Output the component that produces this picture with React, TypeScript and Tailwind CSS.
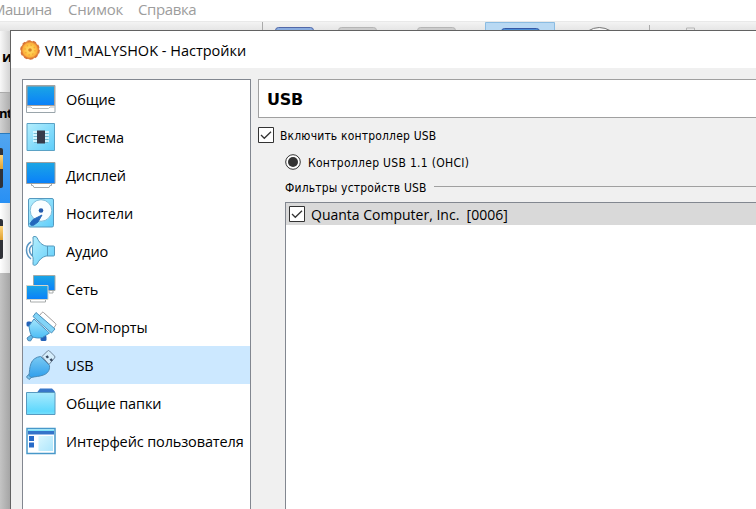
import React from "react";

type IconProps = { children: React.ReactNode };

function Icon({ children }: IconProps) {
  return (
    <svg width="32" height="32" viewBox="0 0 32 32" fill="none" className="shrink-0">
      {children}
    </svg>
  );
}

function Gradients() {
  return (
    <svg width="0" height="0" className="absolute">
      <defs>
        <linearGradient id="screen" x1="0" y1="0" x2="0" y2="1">
          <stop offset="0" stopColor="#1ba6e4" />
          <stop offset="1" stopColor="#0a80fa" />
        </linearGradient>
        <linearGradient id="light" x1="0" y1="0" x2="1" y2="1">
          <stop offset="0" stopColor="#b4eefd" />
          <stop offset="1" stopColor="#5ecdfa" />
        </linearGradient>
        <linearGradient id="folder" x1="0" y1="0" x2="0" y2="1">
          <stop offset="0" stopColor="#a9eafd" />
          <stop offset="0.85" stopColor="#5fd8fd" />
          <stop offset="1" stopColor="#79e0fc" />
        </linearGradient>
        <linearGradient id="plug" x1="0" y1="0" x2="0" y2="1">
          <stop offset="0" stopColor="#79caf3" />
          <stop offset="1" stopColor="#309fec" />
        </linearGradient>
        <linearGradient id="serial" x1="0" y1="0" x2="0" y2="1">
          <stop offset="0" stopColor="#a5e6fc" />
          <stop offset="1" stopColor="#4cbdf5" />
        </linearGradient>
        <radialGradient id="gear">
          <stop offset="0" stopColor="#ffe070" />
          <stop offset="0.6" stopColor="#ffc445" />
          <stop offset="1" stopColor="#f79a35" />
        </radialGradient>
      </defs>
    </svg>
  );
}

const GeneralIcon = () => (
  <Icon>
    <path d="M1.500 2.500h28.500v27H1.500z" fill="#fff" stroke="#9aa5ab" />
    <path d="M2 3h27.500v19.500H2z" fill="url(#screen)" stroke="#aaa29b" />
    <path d="M2 24h4l1.500 1.500h16L25 24h4.500" stroke="#b4b8ba" />
  </Icon>
);
const SystemIcon = () => (
  <Icon>
    <path d="M2 2.500h27.500v27H2z" fill="url(#light)" stroke="#5ba2c5" />
    <path d="M8 11h16M8 14h16M8 17h16M8 20h16" stroke="#e9fcff" strokeWidth="1.500" />
    <path d="M9 12.500h14M9 15.500h14M9 18.500h14M9 21.500h14" stroke="#6aa7bd" strokeWidth=".7" />
    <path d="M12 9.500h8v13h-8z" fill="#373b4b" />
  </Icon>
);
const DisplayIcon = () => (
  <Icon>
    <path d="M6.500 24h20v2.500H25L24 28.500H9l-1-2H6.500z" fill="#fff" stroke="#a4a8aa" />
    <path d="M1.500 3.500H30v21H1.500z" fill="url(#screen)" stroke="#9ca0a0" />
  </Icon>
);
const StorageIcon = () => (
  <Icon>
    <rect x="3.500" y="1.500" width="25" height="28.500" rx="1.500" fill="url(#light)" stroke="#5599bf" />
    <circle cx="16" cy="13.500" r="10.800" fill="#fafeff" stroke="#7dbddb" />
    <circle cx="16" cy="13.500" r="2.300" fill="#245bad" />
    <path d="m17 18-9 4.500-3 4c0 2 2 2.500 4 1.500l4-3z" fill="#2368bd" stroke="#2b6cbc" />
  </Icon>
);
const AudioIcon = () => (
  <Icon>
    <path d="M6 7c-6 3-6 13 0 17M7.500 10c-4 3-4 8 0 11" stroke="#5a96c3" strokeWidth="1.500" />
    <path d="M7.500 11.500c1-2 .5-6 .5-9.500 1-1 3-.5 4 .5 2 5 5 7.500 9 8.500h7.500q1 0 1 1v8q0 1-1 1H21c-4 1-7 4-9 8-2 2-4 1.500-4 0 0-4 .5-6-.5-8z" fill="url(#light)" stroke="#5599bd" />
    <path d="M22.500 11v10" stroke="#5599bd" />
  </Icon>
);
const NetworkIcon = () => (
  <Icon>
    <path d="M24 17h4v3h-4zM5.500 26h15v3h-15z" fill="#fff" stroke="#a7abab" />
    <path d="M8.500 2.500H30v15H8.500z" fill="url(#screen)" stroke="#a3aaa8" />
    <path d="M1.500 12.500H23v14H1.500z" fill="url(#screen)" stroke="#d4d4c8" />
  </Icon>
);
const SerialIcon = () => (
  <Icon>
    <path d="M14.500 4.500 17 1.500q.7-.7 1.500 0l12 11q.8.800.2 1.700L28 18z" fill="#fff" stroke="#a09c9c" />
    <path d="m6 24-4 3 1 2.500 2.500.5L8 26z" fill="#66bce7" stroke="#4e88b8" strokeLinejoin="round" />
    <rect x="1.500" y="10.500" width="5" height="5" rx="1.500" fill="#2463b9" />
    <rect x="15.500" y="24.500" width="6" height="5.500" rx="1.500" fill="#2463b9" />
    <path d="M9 8 4 15c.5 4 1 8 3.500 11 3 .8 6 1.500 10 .5l7-4.500z" fill="url(#serial)" stroke="#438fc2" strokeLinejoin="round" />
    <path d="m8 5.500 3-4L30 18l-3.500 4z" fill="#83d4f7" stroke="#4b91bd" strokeLinejoin="round" />
  </Icon>
);
const UsbIcon = () => (
  <Icon>
    <path d="m17 7.500 5.500-5.500q1-1 2 0l5 5q1 1 0 2L24 15.500z" fill="#d5edfb" stroke="#6f8499" />
    <path d="m20.500 7.500 2-1.200 1.500 2-2 1.200zM24.500 10.500l2-1.200 1.500 2-2 1.200z" fill="#394a61" />
    <path d="m3.500 25.500-2 2.500 2.500 2.500 3-2.500z" fill="#76c1ec" stroke="#4d86ad" />
    <path d="m15.500 7.500 9 9c.5 5-2 8-6 9.500-4 1.500-8 1.500-12.500 2.500l-2-2c.5-4 .5-8 2-12 1.500-4 5-6.500 9.500-7z" fill="url(#plug)" stroke="#4b8bb8" strokeLinejoin="round" />
  </Icon>
);
const FolderIcon = () => (
  <Icon>
    <path d="M12 5.500 15 1.500h12l3 3V9H12z" fill="#3877c9" />
    <path d="M1.500 5.500H30v22H1.500z" fill="url(#folder)" stroke="#579ac0" />
  </Icon>
);
const InterfaceIcon = () => (
  <Icon>
    <path d="M2 3.500h28v25H2z" fill="#fff" stroke="#4798c9" strokeWidth="1.500" />
    <path d="M3 4.500h26v4H3z" fill="#7ce4fb" />
    <path d="M3 6h26v3.500H3z" fill="#3474ca" />
    <path d="M4 11h5v5H4zM4 17.500h5v5H4z" fill="#266ac8" />
    <path d="M13.500 11H28v15H13.500z" fill="url(#light)" opacity=".5" />
  </Icon>
);

const items = [
  { label: "Общие", icon: GeneralIcon },
  { label: "Система", icon: SystemIcon },
  { label: "Дисплей", icon: DisplayIcon },
  { label: "Носители", icon: StorageIcon },
  { label: "Аудио", icon: AudioIcon },
  { label: "Сеть", icon: NetworkIcon },
  { label: "COM-порты", icon: SerialIcon },
  { label: "USB", icon: UsbIcon, selected: true },
  { label: "Общие папки", icon: FolderIcon },
  { label: "Интерфейс пользователя", icon: InterfaceIcon },
];

function Checkbox() {
  return (
    <svg width="16" height="16" viewBox="0 0 16 16" className="shrink-0">
      <path d="M.5.5h15v15H.5z" fill="#fff" stroke="#333" />
      <path d="m3 8 3.300 3.300L13 4.700" fill="none" stroke="#333" strokeWidth="1.300" />
    </svg>
  );
}

function Toolbar() {
  return (
    <svg width="756" height="10" viewBox="0 21 756 10" className="block bg-linear-to-b from-[#f5f5f5] to-[#e4e4e4]">
      <path d="M0 21.500h756" stroke="#e9e9e9" />
      <path d="M262.500 22v9M649.500 25v6" stroke="#aaa" />
      <path d="M485.500 22.500h69V31h-69z" fill="#b9d9f3" stroke="#8bbce2" />
      <rect x="275.500" y="27.500" width="38" height="12" rx="3" fill="#8bade0" stroke="#5268a8" />
      <rect x="338.500" y="27.500" width="38" height="12" rx="3" fill="#ccc" stroke="#b5b5b5" />
      <rect x="417.500" y="27.500" width="38" height="12" rx="3" fill="#ccc" stroke="#b5b5b5" />
      <rect x="501.500" y="28.500" width="38" height="12" rx="3" fill="#4b8dd6" stroke="#3657a4" />
      <path d="M588 31q11-7 23 0" fill="#f6f6f6" stroke="#777" />
      <path d="M686.500 31v-3h8v3M677 30.500h4M700 30.500h4" fill="none" stroke="#b5b5b5" />
    </svg>
  );
}

function MachineRow({ active }: { active?: boolean }) {
  return (
    <div className={active ? "h-[70px] border-t border-[#297abc] bg-linear-to-b from-[#51a5ef] to-[#2890f4] pt-[14px]" : "h-[70px] bg-linear-to-r from-white to-[#ddd] pt-4"}>
      <div className="h-[40px] w-[3px] rounded-r-xs bg-[#303238] pt-[7px]">
        <div className="h-[14px] bg-linear-to-b from-[#ffd67b] to-[#dfa12d]" />
      </div>
    </div>
  );
}

export default function App() {
  return (
    <div className="relative h-[509px] w-[756px] overflow-hidden bg-white font-['Open_Sans','Noto_Sans',sans-serif] text-black">
      <Gradients />
      <div className="flex h-[21px] text-[15px] leading-[19px] whitespace-nowrap text-[#9d9d9d]">
        <span className="-ml-[8px] w-[76px] tracking-[-0.5px]">Машина</span>
        <span className="w-[70px] tracking-[-0.2px]">Снимок</span>
        <span className="tracking-[-0.4px]">Справка</span>
      </div>
      <Toolbar />
      <div className="w-[11px] overflow-hidden">
        <div className="h-[61px] bg-linear-to-r from-[#f8f8f8] to-[#cfcfcf] pt-[16px] pl-[2px] text-[14px] leading-5 font-bold">и</div>
        <div className="h-[41px] border-t border-[#aaa] bg-linear-to-r from-[#d2d2d2] to-[#aaa] pt-[10px] text-[13px] leading-5 font-bold tracking-[-0.8px]">
          <span className="-ml-[1px]">nt</span>
        </div>
        <MachineRow active />
        <MachineRow />
        <div className="h-[236px] bg-linear-to-r from-[#c4c4c4] to-[#a2a2a2]" />
      </div>

      <div className="absolute top-[30px] left-[10px] flex h-[479px] w-[746px] flex-col border-t border-l border-[#626262] bg-[#f0f0f0]">
        <header className="flex h-[37px] shrink-0 items-center bg-white pl-[9px]">
          <svg width="20" height="20" viewBox="0 0 20 20">
            <circle cx="10" cy="10" r="8.600" fill="url(#gear)" stroke="#e08438" strokeWidth="1.500" />
            <circle cx="10" cy="10" r="9" fill="none" stroke="#d9733a" strokeWidth="1.600" strokeDasharray="3.200 2.450" />
            <circle cx="10" cy="10" r="5" fill="none" stroke="#f3a83c" strokeWidth="1.400" strokeDasharray="1.500 2.400" />
            <circle cx="10" cy="10" r="1.800" fill="#d68127" />
          </svg>
          <span className="ml-[5px] pt-[2px] text-[14.500px] leading-5 whitespace-nowrap">VM1_MALYSHOK - Настройки</span>
        </header>
        <main className="flex min-h-0 flex-1 gap-[7px] pt-[11px] pl-[11px]">
          <nav className="w-[229px] shrink-0 border border-b-0 border-[#828790] bg-white">
            {items.map(({ label, icon: ItemIcon, selected }) => (
              <div key={label} className={`flex h-[38px] items-center gap-[9px] pl-[2px] ${selected ? "bg-[#cce8ff]" : ""}`}>
                <ItemIcon />
                <span className="pt-[2px] text-[14.500px] leading-5 tracking-[-0.13px] whitespace-nowrap">{label}</span>
              </div>
            ))}
          </nav>
          <section className="flex min-w-0 flex-1 flex-col font-['DejaVu_Sans_Condensed','DejaVu_Sans',sans-serif] text-[12px] tracking-[0.18px]">
            <div className="flex h-[39px] shrink-0 items-center border border-r-0 border-[#a0a0a0] bg-white pt-[2px] pl-2 font-['DejaVu_Sans',sans-serif] text-[16px] font-bold tracking-[-0.2px]">
              USB
            </div>
            <div className="mt-[9px] flex h-4 items-center gap-[6px]">
              <Checkbox />
              <span className="pt-[2px] whitespace-nowrap">Включить контроллер USB</span>
            </div>
            <div className="mt-[11px] ml-[27px] flex h-4 items-center gap-[7px]">
              <svg width="16" height="16" viewBox="0 0 16 16">
                <circle cx="8" cy="8" r="7.300" fill="#fff" stroke="#333" />
                <circle cx="8" cy="8" r="5" fill="#333" />
              </svg>
              <span className="pt-[2px] tracking-[0.3px] whitespace-nowrap">Контроллер USB 1.1 (OHCI)</span>
            </div>
            <div className="mt-[9px] ml-[27px] flex h-4 items-center">
              <span className="w-[149px] pt-[2px] whitespace-nowrap">Фильтры устройств USB</span>
              <div className="-mt-px h-px flex-1 bg-[#a0a0a0]" />
            </div>
            <div className="mt-[7px] ml-[27px] flex-1 border-t border-l border-[#828790] bg-white">
              <div className="flex h-[22px] items-center gap-[6px] bg-[#d9d9d9] pl-[3px]">
                <Checkbox />
                <span className="pt-px font-['Open_Sans','Noto_Sans',sans-serif] text-[14px] leading-5 tracking-normal whitespace-pre">Quanta Computer, Inc.  [0006]</span>
              </div>
            </div>
          </section>
        </main>
      </div>
    </div>
  );
}
